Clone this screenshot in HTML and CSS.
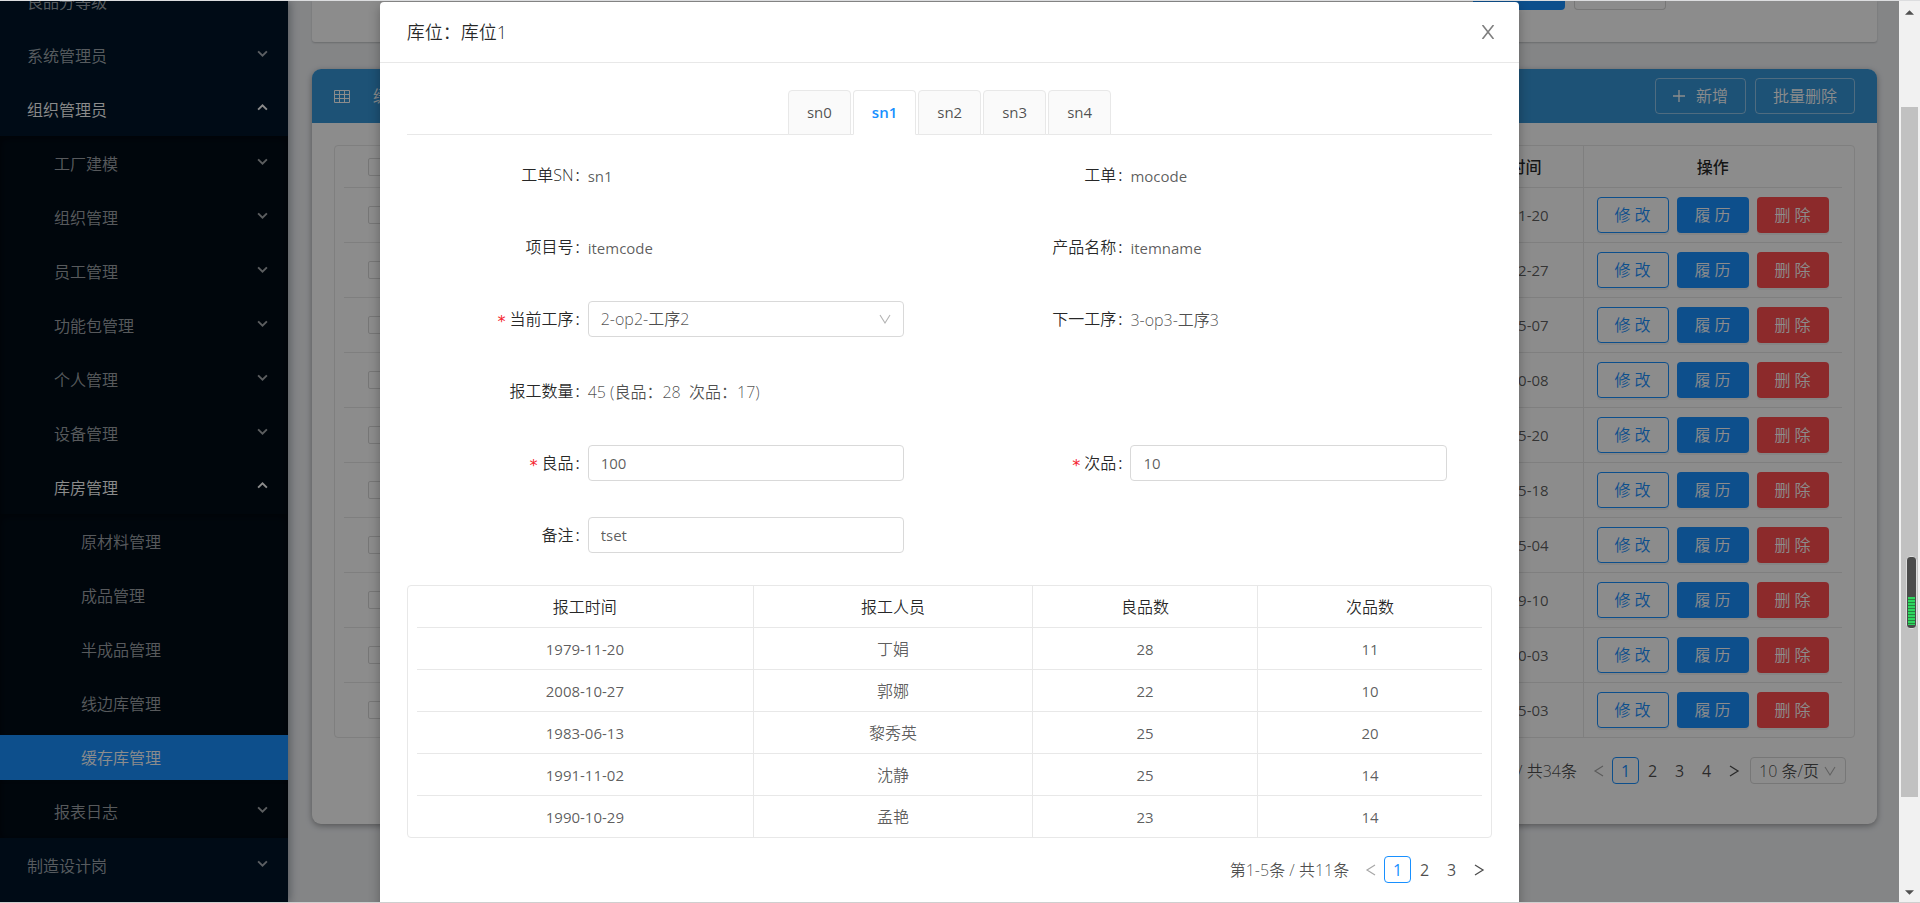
FILE: index.html
```html
<!DOCTYPE html>
<html lang="zh-CN">
<head>
<meta charset="utf-8">
<title>缓存库管理</title>
<link rel="stylesheet" href="styles.css">
</head>
<body>
<svg class="defs" aria-hidden="true">
  <symbol id="down" viewBox="0 0 10 10"><path d="M1 3l4 4 4-4" fill="none" stroke="currentColor" stroke-width="1.700"/></symbol>
  <symbol id="up" viewBox="0 0 10 10"><path d="M1 7l4-4 4 4" fill="none" stroke="currentColor" stroke-width="1.700"/></symbol>
  <symbol id="prev" viewBox="0 0 12 12"><path d="M10 1L2 6l8 5" fill="none" stroke="currentColor" stroke-width="1.2"/></symbol>
  <symbol id="next" viewBox="0 0 12 12"><path d="M2 1l8 5-8 5" fill="none" stroke="currentColor" stroke-width="1.3"/></symbol>
  <symbol id="open" viewBox="0 0 12 12"><path d="M1 2l5 8 5-8" fill="none" stroke="currentColor" stroke-width="1.1"/></symbol>
</svg>
<div class="window">
  <div class="page">
    <nav class="sidebar">
      <ul class="menu">
        <li><a href="#">良品分等级</a></li>
        <li><a href="#">系统管理员<svg><use href="#down"/></svg></a></li>
        <li class="open"><a href="#">组织管理员<svg><use href="#up"/></svg></a>
          <ul class="submenu">
            <li><a href="#">工厂建模<svg><use href="#down"/></svg></a></li>
            <li><a href="#">组织管理<svg><use href="#down"/></svg></a></li>
            <li><a href="#">员工管理<svg><use href="#down"/></svg></a></li>
            <li><a href="#">功能包管理<svg><use href="#down"/></svg></a></li>
            <li><a href="#">个人管理<svg><use href="#down"/></svg></a></li>
            <li><a href="#">设备管理<svg><use href="#down"/></svg></a></li>
            <li class="open"><a href="#">库房管理<svg><use href="#up"/></svg></a>
              <ul class="submenu deep">
                <li><a href="#">原材料管理</a></li>
                <li><a href="#">成品管理</a></li>
                <li><a href="#">半成品管理</a></li>
                <li><a href="#">线边库管理</a></li>
                <li class="current"><a href="#">缓存库管理</a></li>
              </ul>
            </li>
            <li><a href="#">报表日志<svg><use href="#down"/></svg></a></li>
          </ul>
        </li>
        <li><a href="#">制造设计岗<svg><use href="#down"/></svg></a></li>
      </ul>
    </nav>
    <main class="content">
      <section class="search-card">
        <button class="btn solid" aria-label="查询"></button>
        <button class="btn plain" aria-label="重置"></button>
      </section>
      <section class="list-card">
        <header class="list-head">
          <svg class="grid-icon" viewBox="0 0 16 13"><path d="M.5.5h15v12H.5zM.5 4.5h15M.5 8.500h15M5.500.5v12M10.500.5v12" fill="none" stroke="currentColor"/></svg>
          <h2>缓存库管理</h2>
          <button class="btn ghost"><svg viewBox="0 0 12 12"><path d="M6 0v12M0 6h12" stroke="currentColor" stroke-width="1.300"/></svg>新增</button>
          <button class="btn ghost">批量删除</button>
        </header>
        <div class="list-body">
          <div class="frame">
            <table class="list">
              <colgroup><col class="c-check"><col><col class="c-date"><col class="c-ops"></colgroup>
              <thead><tr><th><input type="checkbox" aria-label="全选"></th><th></th><th>创建时间</th><th>操作</th></tr></thead>
              <tbody id="rows"></tbody>
            </table>
          </div>
          <div class="pager wide">
            <span class="total">/ 共34条</span>
            <button class="pg off" aria-label="上一页"><svg><use href="#prev"/></svg></button>
            <button class="pg on">1</button><button class="pg">2</button><button class="pg">3</button><button class="pg">4</button>
            <button class="pg" aria-label="下一页"><svg><use href="#next"/></svg></button>
            <span class="select size"><select aria-label="每页条数"><option>10 条/页</option></select><svg><use href="#open"/></svg></span>
          </div>
        </div>
      </section>
    </main>
    <div class="mask">
      <div class="modal" role="dialog" aria-labelledby="dlg-title">
        <header class="modal-head">
          <h1 id="dlg-title">库位：库位1</h1>
          <button class="close" aria-label="关闭"><svg viewBox="0 0 14 14"><path d="M1.500 0l11 14M12.500 0l-11 14" fill="none" stroke="currentColor" stroke-width="1.600"/></svg></button>
        </header>
        <div class="modal-body">
          <div class="tabs" role="tablist">
            <button role="tab">sn0</button><button role="tab" class="active" aria-selected="true">sn1</button><button role="tab">sn2</button><button role="tab">sn3</button><button role="tab">sn4</button>
          </div>
          <form class="form">
            <div class="field"><span class="label">工单SN</span><span class="value">sn1</span></div>
            <div class="field"><span class="label">工单</span><span class="value">mocode</span></div>
            <div class="field"><span class="label">项目号</span><span class="value">itemcode</span></div>
            <div class="field"><span class="label">产品名称</span><span class="value">itemname</span></div>
            <div class="field"><label class="label required" for="op">当前工序</label><span class="select"><select id="op"><option>2-op2-工序2</option></select><svg><use href="#open"/></svg></span></div>
            <div class="field"><span class="label">下一工序</span><span class="value cjk">3-op3-工序3</span></div>
            <div class="field full"><span class="label">报工数量</span><span class="value cjk">45 (良品：28&nbsp; 次品：17)</span></div>
            <div class="field"><label class="label required" for="good">良品</label><input id="good" type="text" value="100"></div>
            <div class="field"><label class="label required" for="bad">次品</label><input id="bad" type="text" value="10"></div>
            <div class="field"><label class="label" for="note">备注</label><input id="note" type="text" value="tset"></div>
          </form>
          <div class="frame">
            <table class="report">
              <colgroup><col class="r-time"><col class="r-user"><col><col></colgroup>
              <thead><tr><th>报工时间</th><th>报工人员</th><th>良品数</th><th>次品数</th></tr></thead>
              <tbody>
                <tr><td>1979-11-20</td><td class="cjk">丁娟</td><td>28</td><td>11</td></tr>
                <tr><td>2008-10-27</td><td class="cjk">郭娜</td><td>22</td><td>10</td></tr>
                <tr><td>1983-06-13</td><td class="cjk">黎秀英</td><td>25</td><td>20</td></tr>
                <tr><td>1991-11-02</td><td class="cjk">沈静</td><td>25</td><td>14</td></tr>
                <tr><td>1990-10-29</td><td class="cjk">孟艳</td><td>23</td><td>14</td></tr>
              </tbody>
            </table>
          </div>
          <div class="pager">
            <span class="total">第1-5条 / 共11条</span>
            <button class="pg off" aria-label="上一页"><svg><use href="#prev"/></svg></button>
            <button class="pg on">1</button><button class="pg">2</button><button class="pg">3</button>
            <button class="pg" aria-label="下一页"><svg><use href="#next"/></svg></button>
          </div>
        </div>
      </div>
    </div>
  </div>
  <div class="scrollbar">
    <svg viewBox="0 0 10 5"><path d="M0 5l5-5 5 5z"/></svg>
    <div class="track"><div class="thumb"></div></div>
    <svg viewBox="0 0 10 5"><path d="M0 0l5 5 5-5z"/></svg>
    <div class="meter"><div class="level"></div></div>
  </div>
</div>
<script src="rows.js"></script>
</body>
</html>
```
FILE: rows.js
```js
const dates = ['1981-11-20', '1992-12-27', '1985-05-07', '1990-10-08', '1996-05-20', '1988-05-18', '2001-05-04', '1999-09-10', '2003-10-03', '1994-05-03'];
document.getElementById('rows').innerHTML = dates.map(date => `
  <tr>
    <td><input type="checkbox" aria-label="选择"></td><td></td><td>${date}</td>
    <td><div class="ops"><button class="btn line">修 改</button><button class="btn solid">履 历</button><button class="btn danger">删 除</button></div></td>
  </tr>`).join('');
```
FILE: styles.css
```css
* { box-sizing: border-box; }
body { margin: 0; font: 350 16px/24px "Open Sans", "Noto Sans CJK SC", sans-serif; color: rgba(0,0,0,.7); }
button, input, select { font: inherit; color: inherit; margin: 0; }
button { background: none; border: 0; padding: 0; cursor: pointer; }
ul { list-style: none; margin: 0; padding: 0; }
h1, h2 { margin: 0; font-weight: 350; }
table { width: 100%; border-collapse: collapse; table-layout: fixed; }
.defs { display: none; }

.window { display: flex; height: 100vh; overflow: hidden; border-top: 1px solid #dcdddf; border-bottom: 1px solid #cfcfcf; }
.page { position: relative; flex: 1; display: flex; min-width: 0; overflow: hidden; background: #f0f2f5; }

.sidebar { width: 288px; flex: none; background: #001529; box-shadow: 2px 0 8px rgba(0,21,41,.35); z-index: 1; }
.menu { margin-top: -27px; }
.menu a { display: flex; align-items: center; justify-content: space-between; height: 45px; margin: 5px 0 4px; padding: 0 20px 0 27px; color: rgba(255,255,255,.65); text-decoration: none; }
.menu li { display: flow-root; }
.menu svg { width: 11px; height: 11px; margin-bottom: 4px; }
.menu .open > a, .menu .current > a { color: #fff; }
.submenu { background: #000c17; box-shadow: inset 0 2px 8px rgba(0,0,0,.45); }
.menu .submenu a { padding-left: 54px; }
.menu .deep a { padding-left: 81px; }
.current a { background: #1890ff; }

.content { flex: 1; min-width: 0; padding: 0 22px 0 24px; }
.search-card { display: flex; justify-content: flex-end; gap: 9px; height: 41px; padding-right: 211px; background: #fff; border-radius: 0 0 3px 3px; box-shadow: 0 1px 2px rgba(0,0,0,.2); }
.search-card .btn { width: 92px; height: 9px; border-top: 0; border-radius: 0 0 4px 4px; }
.list-card { margin-top: 27px; background: #fff; border-radius: 9px; box-shadow: 0 2px 6px rgba(0,0,0,.35); }
.list-head { display: flex; align-items: center; gap: 9px; height: 54px; padding: 0 22px; color: #fff; background: #3595d8; border-radius: 9px 9px 0 0; }
.grid-icon { width: 16px; height: 13px; }
.list-head h2 { flex: 1; margin-left: 14px; font-size: 16px; }
.list-body { padding: 22px 22px 40px; }

.btn { height: 36px; border: 1px solid transparent; border-radius: 4px; line-height: 34px; }
.solid { background: #1890ff; color: #fff; }
.danger { background: #ff4d4f; color: #fff; }
.line { border-color: #1890ff; color: #1890ff; }
.plain { border-color: #d9d9d9; }
.ghost { padding: 0 17px; border-color: rgba(255,255,255,.45); }
.ghost svg { width: 12px; height: 12px; margin-right: 11px; }

.frame { border: 1px solid #e8e8e8; border-radius: 4px; padding: 0 9px; }
.frame th, .frame td { height: 42px; padding: 1px 0 0; text-align: center; font-weight: 350; border-bottom: 1px solid #e8e8e8; }
.frame th { height: 41px; color: rgba(0,0,0,.85); }
.frame tr:last-child td { border-bottom: 0; }
.frame td { font-size: 15px; font-weight: 400; color: rgba(0,0,0,.65); }
.frame td.cjk { font-size: 16px; font-weight: 350; }
.frame th + th, .frame td + td { border-left: 1px solid #e8e8e8; }
.list-body .frame { padding-right: 12px; }
.frame .list td { height: 55px; padding-top: 0; }
.frame .list th { font-weight: 500; }
.frame .list tr > :nth-child(2) { border-left: 0; }
.c-check { width: 60px; }
.c-date { width: 147px; }
.c-ops { width: 259px; }
.list input { appearance: none; display: block; width: 18px; height: 18px; margin: 0 auto 0 24px; border: 1px solid #d9d9d9; border-radius: 2px; }
.ops { display: flex; gap: 8px; padding-left: 13px; }
.ops .btn { width: 72px; font-size: 16px; font-weight: 350; box-shadow: 0 2px 0 rgba(0,0,0,.05); }

.pager { display: flex; align-items: center; justify-content: flex-end; height: 27px; margin-top: 18px; }
.pager .total { margin-right: 8px; }
.pg { display: grid; place-items: center; width: 27px; height: 27px; border: 1px solid transparent; border-radius: 4px; line-height: 24px; font-weight: 400; }
.pg svg { width: 12px; height: 12px; }
.pg.on { border-color: #1890ff; color: #1890ff; }
.pg.off { color: rgba(0,0,0,.35); }
.wide { padding-right: 9px; }
.list-body .pager { margin-top: 19px; }

.select { position: relative; display: block; }
.select select { appearance: none; width: 100%; height: 36px; padding: 0 12px; border: 1px solid #d9d9d9; border-radius: 4px; background: #fff; }
.select svg { position: absolute; right: 13px; top: 50%; width: 12px; height: 12px; margin-top: -6px; color: rgba(0,0,0,.3); pointer-events: none; }
.select.size { width: 96px; margin-left: 3px; }
.select.size select { height: 27px; padding: 0 8px; line-height: 24px; }
.select.size svg { right: 10px; }

.mask { position: absolute; inset: 0; z-index: 2; padding-top: 1px; background: rgba(0,0,0,.45); }
.modal { width: 60%; min-height: 100%; margin: 0 auto; background: #fff; border-radius: 4px 4px 0 0; box-shadow: 0 4px 12px rgba(0,0,0,.3); }
.modal-head { display: flex; align-items: center; justify-content: space-between; height: 61px; padding: 0 24px 0 27px; border-bottom: 1px solid #e8e8e8; }
.modal-head h1 { font-size: 18px; color: rgba(0,0,0,.85); }
.close { display: flex; color: rgba(0,0,0,.5); }
.close svg { width: 14px; height: 14px; }
.modal-body { padding: 27px; }
.tabs { display: flex; justify-content: center; gap: 2px; border-bottom: 1px solid #e8e8e8; }
.tabs button { height: 45px; margin-bottom: -1px; padding: 0 18px 2px; font-size: 15px; font-weight: 400; border: 1px solid #e8e8e8; border-radius: 4px 4px 0 0; background: #fafafa; }
.tabs .active { border-bottom-color: #fff; background: #fff; color: #1890ff; font-weight: 600; }

.form { display: grid; grid-template-columns: 1fr 1fr; row-gap: 36px; margin: 22px 0 32px; }
.field { display: grid; grid-template-columns: 4fr 7fr 1fr; align-items: center; height: 36px; }
.field.full { grid-column: span 2; grid-template-columns: 2fr 10fr; }
.label { text-align: right; color: rgba(0,0,0,.85); }
.label::after { content: ":"; margin: 0 8px 0 2px; font-weight: 400; }
.required::before { content: "*"; margin-right: 3px; color: #f5222d; font: 16px/20px "DejaVu Sans Mono", monospace; vertical-align: -2px; }
.value, .field input { font-size: 15px; font-weight: 400; color: rgba(0,0,0,.65); }
.value { padding-top: 2px; }
.value.cjk { font-size: 16px; font-weight: 350; color: rgba(0,0,0,.7); }
.field input { width: 100%; height: 36px; padding: 0 12px; border: 1px solid #d9d9d9; border-radius: 4px; }
.r-time { width: 31.6%; }
.r-user { width: 26.2%; }

.scrollbar { position: relative; display: flex; flex-direction: column; align-items: center; width: 21px; padding: 9px 0 7px; background: #f1f1f1; }
.scrollbar > svg { width: 9px; height: 5px; fill: #505050; }
.track { flex: 1; width: 17px; padding: 92px 0 93px; }
.thumb { height: 100%; background: #c1c1c1; }
.meter { position: absolute; right: 3px; top: 555px; width: 11px; height: 73px; padding: 40px 1px 2px; border: 1px solid #ddd; border-radius: 4px; background: #4b4b4b; }
.level { height: 28px; background: repeating-linear-gradient(#2fd75f 0 2px, #27863f 2px 3px); }
```
